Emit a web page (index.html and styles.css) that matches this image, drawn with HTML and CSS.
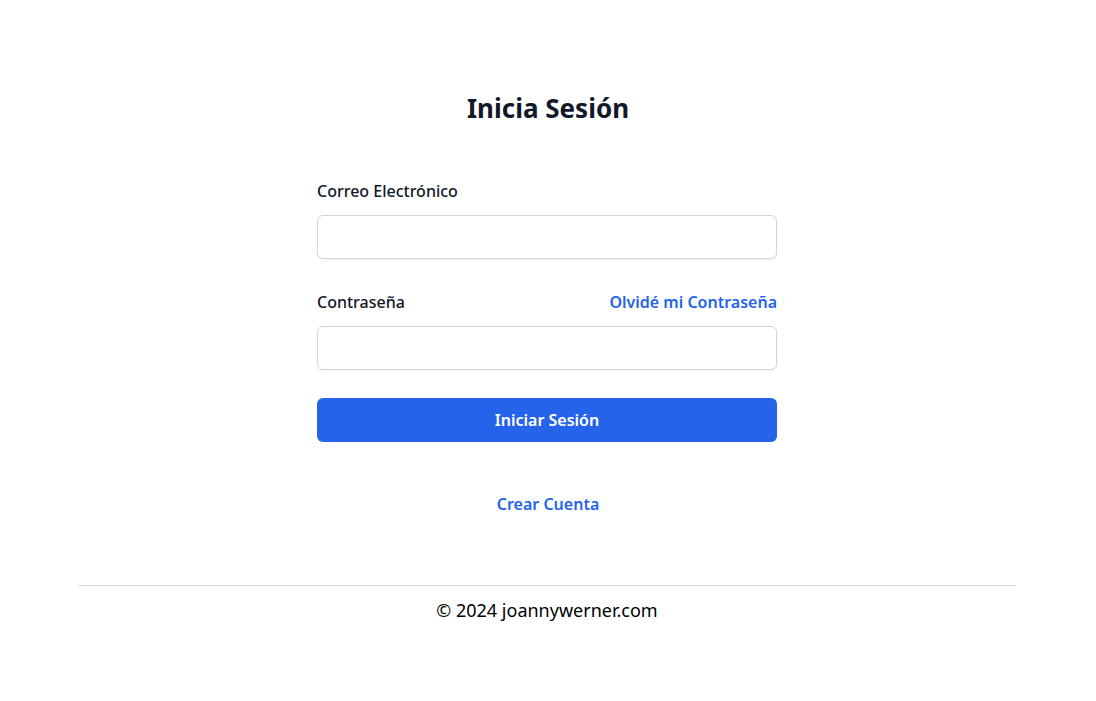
FILE: index.html
```html
<!DOCTYPE html>
<html lang="es">
<head>
<meta charset="utf-8">
<title>Inicia Sesión</title>
<link rel="stylesheet" href="styles.css">
</head>
<body>
<main class="page">
  <h2 class="title">Inicia Sesión</h2>
  <form class="form">
    <div class="field">
      <label class="label" for="email">Correo Electrónico</label>
      <input class="input" id="email" type="email">
    </div>
    <div class="field">
      <div class="label-row">
        <label class="label" for="password">Contraseña</label>
        <a class="link" href="#">Olvidé mi Contraseña</a>
      </div>
      <input class="input" id="password" type="password">
    </div>
    <button class="button" type="button">Iniciar Sesión</button>
  </form>
  <p class="create"><a class="link" href="#">Crear Cuenta</a></p>
</main>
<footer class="footer">
  <p class="footer-text">© 2024 joannywerner.com</p>
</footer>
</body>
</html>
```
FILE: styles.css
```css
* { box-sizing: border-box; }
html, body { margin: 0; padding: 0; background: #fff; }
body {
  font-family: "Noto Sans", "Open Sans", sans-serif;
  color: #111827;
}
.page {
  display: flex;
  flex-direction: column;
  align-items: center;
  padding-top: 91px;
}
.title {
  margin: 0;
  font-size: 26px;
  line-height: 34px;
  font-weight: 700;
  color: #111827;
}
.form {
  width: 460px;
  margin-top: 56px;
  margin-right: 2px;
  display: flex;
  flex-direction: column;
}
.field { display: flex; flex-direction: column; gap: 14px; margin-bottom: 33px; }
.field + .field { margin-bottom: 28px; }
.label-row { display: flex; justify-content: space-between; align-items: center; }
.label {
  font-size: 16px;
  line-height: 20px;
  font-weight: 500;
  color: #111827;
}
.link {
  font-size: 16px;
  line-height: 20px;
  font-weight: 600;
  color: #2563eb;
  text-decoration: none;
}
.input {
  display: block;
  width: 100%;
  height: 44px;
  border: 1px solid #d1d5db;
  border-radius: 6px;
  box-shadow: 0 1px 2px rgba(0,0,0,0.05);
  font-family: inherit;
  font-size: 16px;
  padding: 0 12px;
  background: #fff;
}
.button {
  height: 44px;
  width: 100%;
  border: 0;
  border-radius: 6px;
  background: #2563eb;
  color: #fff;
  font-family: inherit;
  font-size: 16px;
  font-weight: 600;
}
.create {
  margin: 52px 0 0;
  line-height: 20px;
  text-align: center;
}
.footer {
  margin: 71px 80px 0 78px;
  border-top: 1px solid #d9d9d9;
  padding-top: 10px;
  text-align: center;
}
.footer-text {
  margin: 0;
  font-size: 18px;
  line-height: 28px;
  color: #000;
}
```
